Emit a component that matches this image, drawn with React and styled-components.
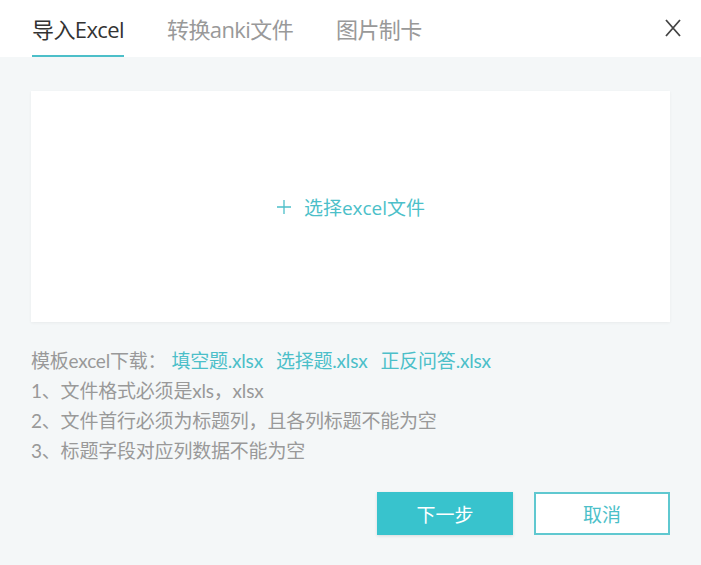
import React from 'react';
import styled, { createGlobalStyle } from 'styled-components';

const GlobalStyle = createGlobalStyle`
  html, body {
    margin: 0;
    padding: 0;
    background: #f4f7f8;
    font-family: "Open Sans", "Noto Sans CJK SC", sans-serif;
  }
`;

const Dialog = styled.div`
  width: 701px;
  height: 565px;
  background: #f4f7f8;
  display: flex;
  flex-direction: column;
`;

const Header = styled.div`
  height: 57px;
  background: #fff;
  display: flex;
  align-items: stretch;
  padding: 0 20px 0 32px;
`;

const Tabs = styled.div`
  display: flex;
  gap: 43px;
  flex: 1;
`;

const Tab = styled.div`
  font-size: 22px;
  color: ${(p) => (p.$active ? '#333' : '#999')};
  display: flex;
  align-items: center;
  border-bottom: 2px solid ${(p) => (p.$active ? '#4cbfc9' : 'transparent')};
  box-sizing: border-box;
  letter-spacing: -0.6px;
`;

const CloseButton = styled.div`
  display: flex;
  align-items: center;
  padding-bottom: 2px;
`;

const Body = styled.div`
  flex: 1;
  padding: 34px 31px 0 31px;
  display: flex;
  flex-direction: column;
`;

const DropZone = styled.div`
  height: 231px;
  background: #fff;
  box-shadow: 0 1px 3px rgba(0, 0, 0, 0.05);
  display: flex;
  align-items: center;
  justify-content: center;
  color: #4cbfc9;
  font-size: 19px;
  gap: 12px;
  box-sizing: border-box;
`;

const Notes = styled.div`
  margin-top: 24px;
  display: flex;
  flex-direction: column;
  font-family: "Lato", "Noto Sans CJK SC", sans-serif;
  font-size: 19px;
  color: #999;
  line-height: 30px;
  letter-spacing: -0.2px;
`;

const TemplateRow = styled.div`
  display: flex;
  gap: 13px;
`;

const TemplateLabel = styled.span`
  margin-right: -8px;
`;

const TemplateLink = styled.span`
  color: #4cbfc9;
`;

const Footer = styled.div`
  margin-top: 26px;
  display: flex;
  justify-content: flex-end;
  gap: 21px;
`;

const Button = styled.div`
  width: 136px;
  height: 43px;
  box-sizing: border-box;
  display: flex;
  align-items: center;
  justify-content: center;
  font-size: 19px;
  background: ${(p) => (p.$primary ? '#38c3cd' : '#fff')};
  color: ${(p) => (p.$primary ? '#fff' : '#4cbfc9')};
  border: 2px solid ${(p) => (p.$primary ? '#38c3cd' : '#5fc8d0')};
  box-shadow: ${(p) => (p.$primary ? '0 1px 3px rgba(0,0,0,0.12)' : 'none')};
`;

const App = () => (
  <Dialog>
    <GlobalStyle />
    <Header>
      <Tabs>
        <Tab $active>导入Excel</Tab>
        <Tab>转换anki文件</Tab>
        <Tab>图片制卡</Tab>
      </Tabs>
      <CloseButton>
        <svg width="16" height="18" viewBox="0 0 16 18">
          <path d="M1 1 L15 17 M15 1 L1 17" stroke="#444" strokeWidth="1.8" fill="none" />
        </svg>
      </CloseButton>
    </Header>
    <Body>
      <DropZone>
        <svg width="16" height="16" viewBox="0 0 16 16">
          <path d="M8 1 V15 M1 8 H15" stroke="#4cbfc9" strokeWidth="1.3" fill="none" />
        </svg>
        <span>选择excel文件</span>
      </DropZone>
      <Notes>
        <TemplateRow>
          <TemplateLabel>模板excel下载：</TemplateLabel>
          <TemplateLink>填空题.xlsx</TemplateLink>
          <TemplateLink>选择题.xlsx</TemplateLink>
          <TemplateLink>正反问答.xlsx</TemplateLink>
        </TemplateRow>
        <div>1、文件格式必须是xls，xlsx</div>
        <div>2、文件首行必须为标题列，且各列标题不能为空</div>
        <div>3、标题字段对应列数据不能为空</div>
      </Notes>
      <Footer>
        <Button $primary>下一步</Button>
        <Button>取消</Button>
      </Footer>
    </Body>
  </Dialog>
);

export default App;
